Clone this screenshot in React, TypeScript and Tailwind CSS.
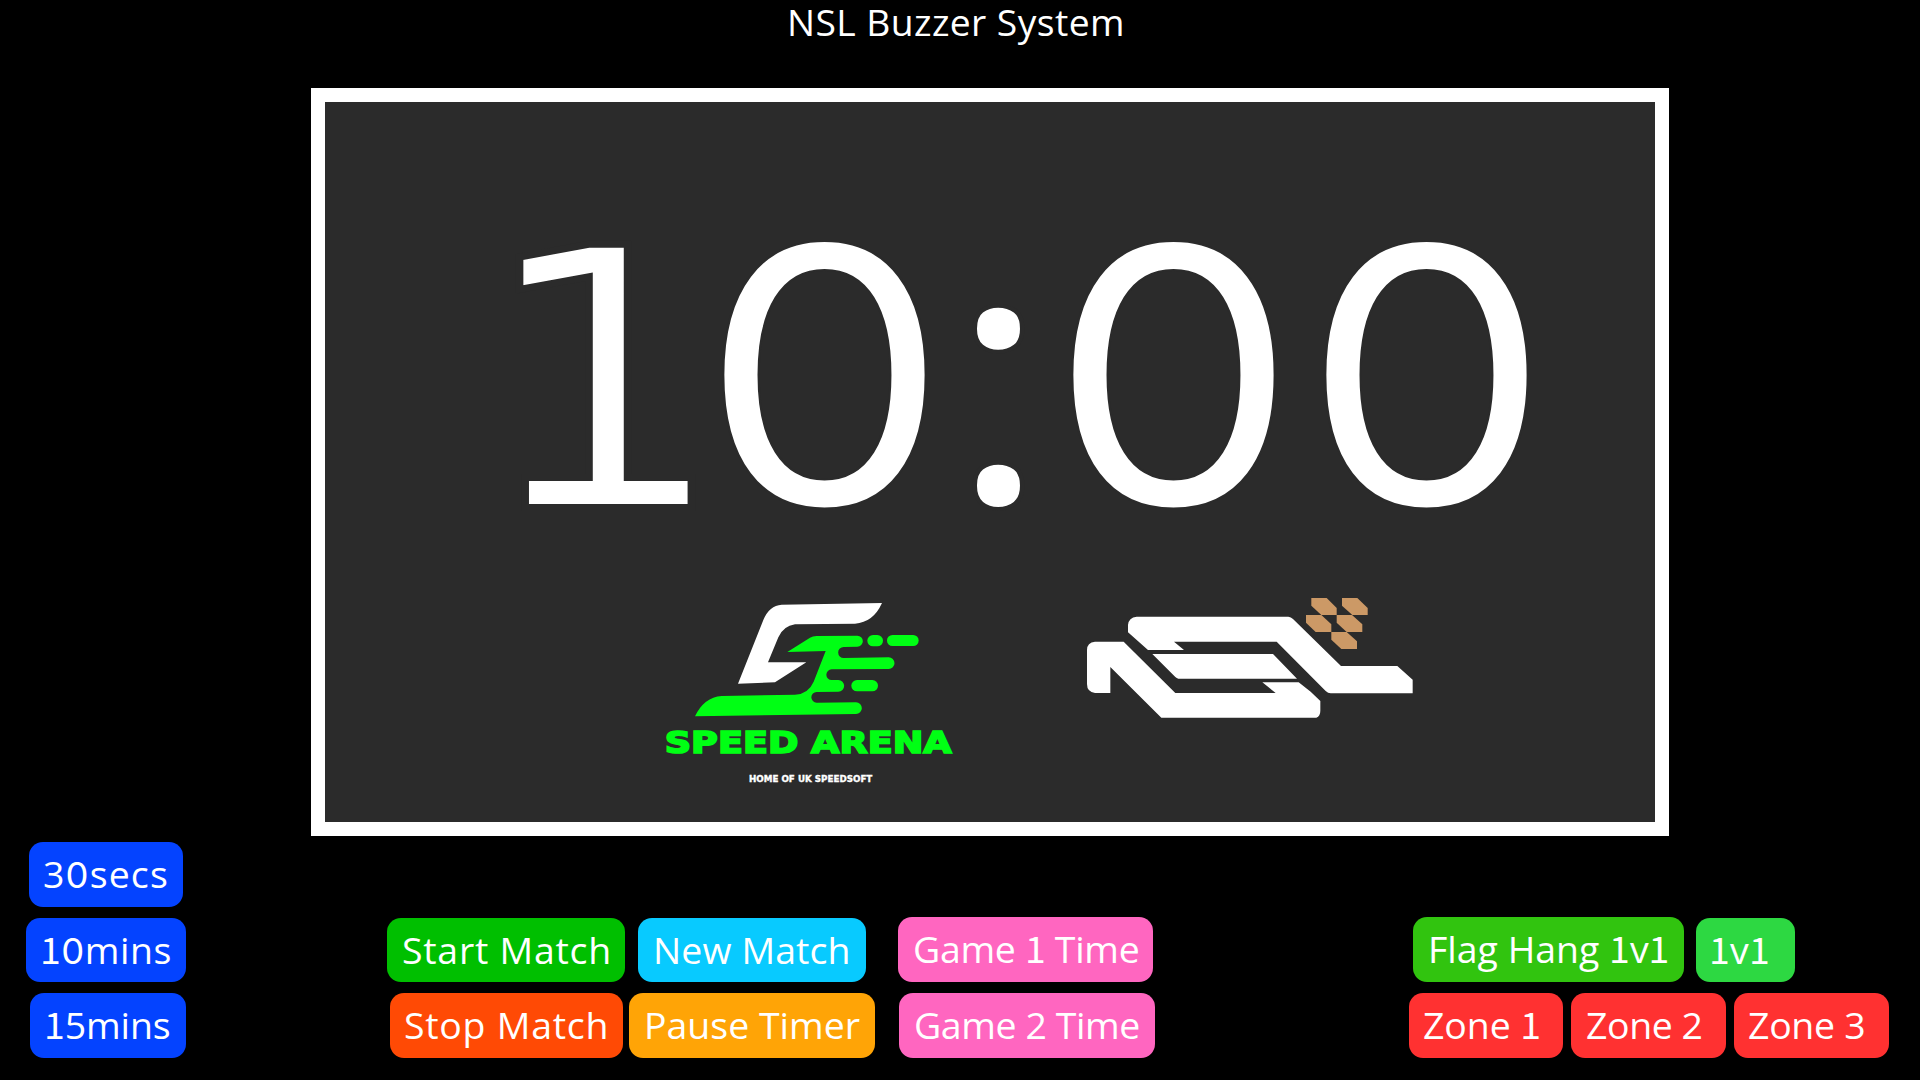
import { Fragment } from "react";

function Glyphs({ text }: { text: string }) {
  return (
    <>
      {text.split("").map((ch, i) =>
        ch === "1" ? (
          <span key={i} className="font-['Noto_Sans_CJK_SC',sans-serif] leading-none">1</span>
        ) : ch === "0" ? (
          <span key={i} className="font-['Inter',sans-serif] text-[35px] leading-none">0</span>
        ) : (
          <Fragment key={i}>{ch}</Fragment>
        )
      )}
    </>
  );
}

function Button({ label, className }: { label: string; className: string }) {
  return (
    <button
      className={`flex h-[64.5px] shrink-0 items-center rounded-[14px] pt-[1.5px] text-left text-[36px] leading-[62px] whitespace-pre text-white ${className}`}
    >
      <span className="origin-left scale-x-[1.04]"><Glyphs text={label} /></span>
    </button>
  );
}

function SpeedArenaLogo() {
  return (
    <svg viewBox="0 0 1020 660" className="h-[220px] w-[340px] shrink-0">
      <path
        fill="#fff"
        d="M425 74L726 69Q700 127 645 131L465 133Q430 138 415 172L384 247H499L405 307L294 311L370 120Q388 76 425 74Z"
      />
      <g fill="#00ff14">
        <path d="M442 216L510 173Q518 168 530 168L652 167A16.5 16.5 0 0 1 652 200L611 201A16.5 16.5 0 0 0 611 234L746 232A17 17 0 0 1 746 267L575 268A16 16 0 0 0 575 300H595A17 17 0 0 1 595 335L530 336A16 16 0 0 0 530 368L648 367A17.5 17.5 0 0 1 648 402L165 409Q192 352 245 348L465 344Q505 342 521 305L557 213Z" />
        <rect x="682" y="165" width="47" height="34" rx="17" />
        <rect x="741" y="165" width="95" height="33" rx="16.5" />
        <rect x="634" y="300" width="80" height="34" rx="17" />
        <text
          x="74"
          y="519"
          textLength="861"
          lengthAdjust="spacingAndGlyphs"
          stroke="#00ff14"
          strokeWidth="5"
          className="font-['DejaVu_Sans',sans-serif] text-[89px] font-bold"
        >
          SPEED ARENA
        </text>
      </g>
      <text
        x="327"
        y="606"
        fill="#fff"
        stroke="#fff"
        strokeWidth="1"
        textLength="370"
        lengthAdjust="spacingAndGlyphs"
        className="font-['DejaVu_Sans',sans-serif] text-[24px] font-bold"
      >
        HOME OF UK SPEEDSOFT
      </text>
    </svg>
  );
}

function NslLogo() {
  return (
    <svg viewBox="0 0 1080 450" className="h-[150px] w-[360px] shrink-0">
      <g fill="#fff">
        <path d="M75 185H161L316 339H617L577 307H686L722 335L751 363V392Q751 408 739 413H274L121 261V339H75Q51 336 51 312V210Q51 187 75 185Z" />
        <path d="M200 110H655Q663 111 669 117L813 258H982L1028 299V340H782Q774 340 767 333L620 185H312L342 210H234L174 157V135Q176 112 200 110Z" />
        <path d="M247 222H609L681 296H325Q320 295 316 291Z" />
      </g>
      <g fill="#cc9966">
        <path d="M724 54h46l30 30v21h-46l-30-28z" />
        <path d="M816 54h46l31 30v21h-46l-31-28z" />
        <path d="M708 105h46l30 28v23h-47l-29-28z" />
        <path d="M800 105h46l31 28v23h-47l-30-28z" />
        <path d="M784 156h46l31 28v23h-47l-30-28z" />
      </g>
    </svg>
  );
}

function Zero({ className }: { className: string }) {
  return (
    <span
      className={`flex scale-x-[1.105] justify-center font-['Inter',sans-serif] text-[358px] [-webkit-text-stroke:2px_#2b2b2b] ${className}`}
    >
      0
    </span>
  );
}

function Clock() {
  return (
    <div className="ml-[174px] flex h-[456px] items-baseline pt-[35px] leading-[456px]">
      <span className="flex w-[206px] translate-y-[2.5px] scale-x-[1.097] justify-center font-['DejaVu_Sans',sans-serif] text-[361px] [-webkit-text-stroke:7px_#2b2b2b]">1</span>
      <Zero className="w-[239px]" />
      <span className="flex w-[109px] -translate-y-px scale-x-[1.13] justify-center font-['Open_Sans',sans-serif] text-[362px] [-webkit-text-stroke:4px_#2b2b2b]">:</span>
      <Zero className="w-[241px]" />
      <Zero className="w-[265px]" />
    </div>
  );
}

export default function App() {
  return (
    <div className="flex h-[1080px] w-[1920px] flex-col overflow-hidden bg-black font-['Open_Sans','Noto_Sans',sans-serif] text-white">
      <h1 className="h-[87.5px] shrink-0 pl-[787px] text-[36px] leading-[46px] whitespace-pre">
        <span className="inline-block origin-left scale-x-[1.035] tracking-[0.4px]">NSL Buzzer System</span>
      </h1>

      <main className="ml-[311px] flex h-[748.5px] w-[1358px] shrink-0 flex-col border-[14.5px] border-white bg-[#2b2b2b]">
        <Clock />
        <div className="flex items-start pt-[22px] pl-[315px]">
          <SpeedArenaLogo />
          <div className="ml-[90px]">
            <NslLogo />
          </div>
        </div>
      </main>

      <div className="flex items-start">
        <div className="flex w-[387px] flex-col gap-[11px] pt-[6px] pl-[26px]">
          <Button label="30secs" className="ml-[3px] w-[154px] bg-[#0443ff] pl-[14px] tracking-[1.1px]" />
          <Button label="10mins" className="w-[159.5px] bg-[#0443ff] pl-[13.5px] tracking-[0.5px]" />
          <Button label="15mins" className="ml-[4px] w-[155.5px] bg-[#0443ff] pl-[13.5px] tracking-[-0.1px]" />
        </div>

        <div className="flex w-[511px] flex-col gap-[11px] pt-[81.5px]">
          <div className="flex gap-[13px]">
            <Button label="Start Match" className="w-[238px] bg-[#00bf00] pl-[15px] tracking-[0.7px]" />
            <Button label="New Match" className="w-[228px] bg-[#08caff] pl-[14.5px] tracking-[0.1px]" />
          </div>
          <div className="flex gap-[6px] pl-[2.5px]">
            <Button label="Stop Match" className="w-[233.5px] bg-[#ff4a05] pl-[14.5px] tracking-[0.7px]" />
            <Button label="Pause Timer" className="w-[246px] bg-[#ffa406] pl-[14.5px]" />
          </div>
        </div>

        <div className="flex w-[511px] flex-col gap-[11.5px] pt-[81px]">
          <Button label="Game 1 Time" className="w-[255px] bg-[#ff66c0] pl-[15px] tracking-[-0.3px]" />
          <Button label="Game 2 Time" className="ml-[0.5px] w-[256px] bg-[#ff66c0] pl-[15px] tracking-[-0.4px]" />
        </div>

        <div className="flex flex-col gap-[11px] pt-[81px]">
          <div className="flex items-end gap-[12.5px] pl-[4px]">
            <Button label="Flag Hang 1v1" className="mb-[0.5px] w-[270.5px] bg-[#31c40f] pl-[15px]" />
            <Button label="1v1" className="mt-[0.5px] w-[98.5px] bg-[#2dd842] pl-[13px] tracking-[0.2px]" />
          </div>
          <div className="flex gap-[8px]">
            <Button label="Zone 1" className="w-[154px] bg-[#ff3131] pl-[14px] tracking-[-0.1px]" />
            <Button label="Zone 2" className="w-[154.5px] bg-[#ff3131] pl-[14.5px] tracking-[-0.4px]" />
            <Button label="Zone 3" className="w-[155.5px] bg-[#ff3131] pl-[14px] tracking-[-0.3px]" />
          </div>
        </div>
      </div>
    </div>
  );
}
